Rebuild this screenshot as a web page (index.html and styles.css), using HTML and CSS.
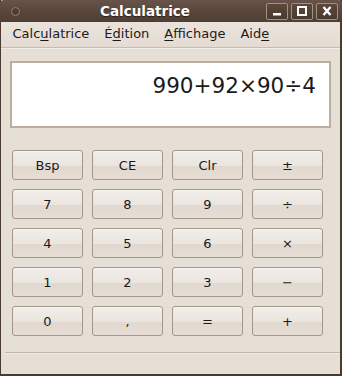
FILE: index.html
```html
<!DOCTYPE html>
<html lang="fr">
<head>
<meta charset="UTF-8">
<title>Calculatrice</title>
<link rel="stylesheet" href="styles.css">
</head>
<body>

<div class="window">
  <div class="titlebar">
    <span class="wm-menu"></span>
    <span class="title">Calculatrice</span>
    <div class="wm-buttons">
      <span class="wm-btn">
        <svg width="12" height="10" viewBox="0 0 12 10"><rect x="2" y="7" width="8" height="2.5" fill="#fff"/></svg>
      </span>
      <span class="wm-btn">
        <svg width="12" height="10" viewBox="0 0 12 10"><rect x="2" y="1" width="8" height="8" fill="none" stroke="#fff" stroke-width="2"/></svg>
      </span>
      <span class="wm-btn">
        <svg width="12" height="10" viewBox="0 0 12 10"><path d="M2.5 1 L9.5 9 M9.5 1 L2.5 9" stroke="#fff" stroke-width="2.4"/></svg>
      </span>
    </div>
  </div>

  <div class="menubar">
    <span class="menu-item">Calc<u>u</u>latrice</span>
    <span class="menu-item">É<u>d</u>ition</span>
    <span class="menu-item"><u>A</u>ffichage</span>
    <span class="menu-item">Aid<u>e</u></span>
  </div>

  <div class="content">
    <div class="display">990+92×90÷4</div>

    <div class="keypad">
      <button class="key">Bsp</button>
      <button class="key">CE</button>
      <button class="key">Clr</button>
      <button class="key">±</button>

      <button class="key">7</button>
      <button class="key">8</button>
      <button class="key">9</button>
      <button class="key">÷</button>

      <button class="key">4</button>
      <button class="key">5</button>
      <button class="key">6</button>
      <button class="key">×</button>

      <button class="key">1</button>
      <button class="key">2</button>
      <button class="key">3</button>
      <button class="key">−</button>

      <button class="key">0</button>
      <button class="key">,</button>
      <button class="key">=</button>
      <button class="key">+</button>
    </div>
  </div>

  <div class="statusbar"></div>
</div>

</body>
</html>
```

FILE: styles.css
```css
* {
  box-sizing: border-box;
  font-family: 'DejaVu Sans', sans-serif;
}

body, html {
  margin: 0;
  width: 342px;
  height: 376px;
  overflow: hidden;
  background: #e6dfd6;
}

.window {
  width: 342px;
  height: 376px;
  display: flex;
  flex-direction: column;
  background: #e6dfd6;
  border-left: 1px solid #4a3a2f;
  border-right: 2px solid #4a3a2f;
  border-bottom: 2px solid #4a3a2f;
}

/* title bar */
.titlebar {
  height: 22px;
  flex: none;
  display: flex;
  align-items: center;
  background: linear-gradient(#67534a, #574539 60%, #4e3e33);
  border-radius: 4px 4px 0 0;
  margin: 0 -2px 0 -1px;
  padding: 0 4px 0 11px;
}

.wm-menu {
  width: 9px;
  height: 9px;
  border-radius: 50%;
  border: 1px solid #8d8178;
  background: #4f3d31;
}

.title {
  flex: 1;
  text-align: center;
  color: #fff;
  font-weight: bold;
  font-size: 13.5px;
  text-shadow: 0 1px 1px #2a1f18;
  margin-right: -4px;
}

.wm-buttons {
  display: flex;
  gap: 3px;
  padding-top: 1px;
}

.wm-btn {
  width: 22px;
  height: 17px;
  display: flex;
  align-items: flex-end;
  justify-content: center;
  padding-bottom: 3px;
  border: 1px solid #a29080;
  border-radius: 2px;
  background: linear-gradient(#5b483b, #4a392e);
}

/* menu bar */
.menubar {
  height: 26px;
  flex: none;
  display: flex;
  align-items: center;
  padding: 0 0 2px 4px;
  background: linear-gradient(#eae3dc, #e4dcd3);
  border-bottom: 1px solid #c9bcaf;
  box-shadow: 0 1px 0 #f1ece7;
  font-size: 13px;
  color: #1e1a16;
}

.menu-item {
  padding: 0 7.5px;
}

.menu-item u {
  text-decoration-thickness: 1px;
  text-underline-offset: 2px;
}

/* main area */
.content {
  flex: 1;
  padding: 13px 9px 0 9px;
}

.display {
  height: 67px;
  background: #fff;
  border: 2px solid #bcae9f;
  padding: 10px 13px 0 0;
  text-align: right;
  font-size: 21.5px;
  line-height: 26px;
  color: #1a1a1a;
}

.keypad {
  display: grid;
  grid-template-columns: repeat(4, 71px);
  grid-auto-rows: 30px;
  gap: 9px;
  margin-top: 22px;
  padding-left: 2px;
}

.key {
  border: 1px solid #a3968a;
  border-radius: 3px;
  background: linear-gradient(#f1ede9, #ebe5df 52%, #e1d8cf 55%, #e6ded6);
  box-shadow: inset 0 1px 0 #f8f6f3;
  font-size: 13px;
  color: #1a1a1a;
  padding: 0;
  cursor: pointer;
}

.key:hover {
  background: linear-gradient(#f6f3f0, #efeae5 52%, #e7dfd7 55%, #ece5de);
}

/* status bar */
.statusbar {
  height: 22px;
  flex: none;
  margin-left: 4px;
  border-top: 1px solid #c3b5a8;
  box-shadow: inset 0 1px 0 #f0ebe5;
}
```
